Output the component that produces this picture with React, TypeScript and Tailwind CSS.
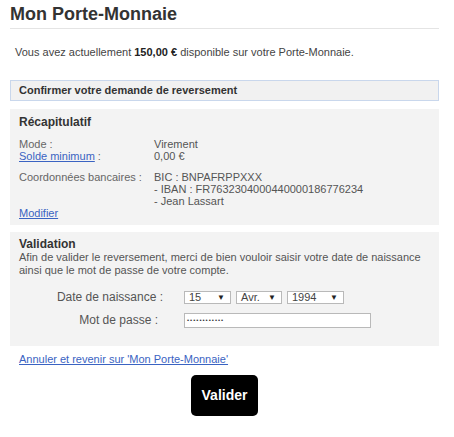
import React from "react";

const font = { fontFamily: '"Liberation Sans", Arial, sans-serif' };

function FakeSelect({ value, width }: { value: string; width: string }) {
  return (
    <div
      className={`${width} h-[13px] flex items-center justify-between bg-white border border-[#b9b9b9] pl-[4px] pr-[5px] text-[11px] leading-none text-[#444]`}
    >
      <span>{value}</span>
      <span className="text-[8px] text-[#222]">▼</span>
    </div>
  );
}

export default function App() {
  return (
    <div className="w-[454px] h-[437px] bg-white text-[#444]" style={font}>
      <div className="ml-[10px] w-[429px] pt-[4px]">
        {/* Title */}
        <h1 className="text-[18px] leading-[21px] font-bold text-[#333] pb-[3px] border-b border-[#e4e4e4]">
          Mon Porte-Monnaie
        </h1>

        <p className="text-[11px] leading-[13px] pl-[5px] mt-[17px]">
          Vous avez actuellement <b className="text-[#222]">150,00 €</b> disponible sur votre
          Porte-Monnaie.
        </p>

        {/* Confirm header */}
        <div className="mt-[21px] h-[21px] flex items-center px-[8px] bg-[#f1f1f1] border border-[#c9d7ec] text-[11px] font-bold text-[#333]">
          Confirmer votre demande de reversement
        </div>

        {/* Recap */}
        <div className="mt-[8px] bg-[#f3f3f3] px-[9px] pt-[6px] pb-[6px]">
          <div className="text-[12px] leading-[14px] font-bold text-[#333]">Récapitulatif</div>
          <div className="mt-[9px] text-[11px] leading-[12px]">
            <div className="flex">
              <span className="w-[135px] text-[#666]">Mode :</span>
              <span className="text-[#555]">Virement</span>
            </div>
            <div className="flex">
              <span className="w-[135px] text-[#666]">
                <a className="text-[#3a63c2] underline">Solde minimum</a> :
              </span>
              <span className="text-[#555]">0,00 €</span>
            </div>
            <div className="flex mt-[9px]">
              <span className="w-[135px] text-[#666]">Coordonnées bancaires :</span>
              <div className="text-[#555]">
                <div>BIC : BNPAFRPPXXX</div>
                <div>- IBAN : FR7632304000440000186776234</div>
                <div>- Jean Lassart</div>
              </div>
            </div>
            <a className="block text-[#3a63c2] underline">Modifier</a>
          </div>
        </div>

        {/* Validation */}
        <div className="mt-[7px] h-[114px] bg-[#f3f3f3] px-[9px] pt-[5px]">
          <div className="text-[12px] leading-[14px] font-bold text-[#333]">Validation</div>
          <p className="text-[11px] leading-[13px] text-[#555]">
            Afin de valider le reversement, merci de bien vouloir saisir votre date de naissance
            ainsi que le mot de passe de votre compte.
          </p>
          <div className="mt-[14px] flex items-center text-[12px] leading-[13px] text-[#555]">
            <span className="w-[146px] text-right pr-[2px]">Date de naissance :</span>
            <div className="ml-[19px] flex gap-[5px]">
              <FakeSelect value="15" width="w-[47px]" />
              <FakeSelect value="Avr." width="w-[46px]" />
              <FakeSelect value="1994" width="w-[57px]" />
            </div>
          </div>
          <div className="mt-[9px] flex items-center text-[12px] leading-[13px] text-[#555]">
            <span className="w-[146px] text-right pr-[7px]">Mot de passe :</span>
            <div className="ml-[19px] w-[187px] h-[15px] flex items-center bg-white border border-[#b9b9b9] pl-[2px] text-[6px] tracking-[1px] text-[#333]">
              ••••••••••••
            </div>
          </div>
        </div>

        <a className="block mt-[7px] ml-[9px] text-[11px] leading-[13px] text-[#3a63c2] underline">
          Annuler et revenir sur 'Mon Porte-Monnaie'
        </a>

        <div className="mt-[9px] flex justify-center">
          <button className="w-[67px] h-[41px] rounded-[5px] bg-black text-white text-[14px] font-bold">
            Valider
          </button>
        </div>
      </div>
    </div>
  );
}
